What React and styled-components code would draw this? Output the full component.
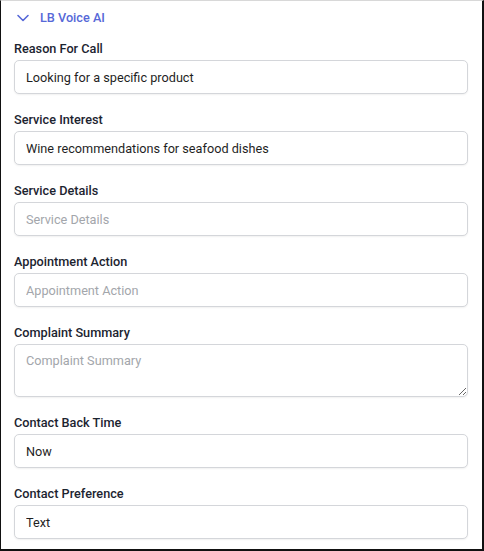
import React from 'react';
import styled, { createGlobalStyle } from 'styled-components';

const GlobalStyle = createGlobalStyle`
  html, body {
    margin: 0;
    padding: 0;
    background: #fff;
  }
  body {
    font-family: Roboto, "Noto Sans", Inter, sans-serif;
  }
`;

const Frame = styled.div`
  box-sizing: border-box;
  width: 484px;
  height: 551px;
  border-left: 1px solid #111;
  border-top: 1px solid #d8d8d8;
  border-right: 2px solid #111;
  border-bottom: 2px solid #111;
  overflow: hidden;
  background: #fff;
`;

const Header = styled.div`
  display: flex;
  align-items: center;
  gap: 10px;
  height: 33px;
  padding: 0 0 0 15px;
  color: #5668d8;
  font-size: 12.7px;
  font-weight: 500;
`;

const Form = styled.div`
  display: flex;
  flex-direction: column;
  gap: 17px;
  padding: 6px 14px 0 13px;
`;

const Field = styled.div`
  display: flex;
  flex-direction: column;
  gap: 3px;
`;

const Label = styled.label`
  font-size: 12.7px;
  font-weight: 500;
  line-height: 17px;
  color: #1c2430;
`;

const Input = styled.input`
  box-sizing: border-box;
  height: 34px;
  width: 100%;
  padding: 0 11px;
  border: 1px solid #d4d6da;
  border-radius: 5px;
  box-shadow: 0 1px 2px rgba(0, 0, 0, 0.06);
  font-family: inherit;
  font-size: 12.7px;
  color: #1f1f1f;
  background: #fff;
  outline: none;
  &::placeholder {
    color: #a3a6ab;
  }
`;

const TextArea = styled.textarea`
  box-sizing: border-box;
  height: 53px;
  width: 100%;
  padding: 8px 11px;
  border: 1px solid #d4d6da;
  border-radius: 5px;
  box-shadow: 0 1px 2px rgba(0, 0, 0, 0.06);
  font-family: inherit;
  font-size: 12.7px;
  color: #1f1f1f;
  resize: vertical;
  outline: none;
  display: block;
  &::placeholder {
    color: #a3a6ab;
  }
`;

const fields = [
  { label: 'Reason For Call', value: 'Looking for a specific product' },
  { label: 'Service Interest', value: 'Wine recommendations for seafood dishes' },
  { label: 'Service Details', placeholder: 'Service Details' },
  { label: 'Appointment Action', placeholder: 'Appointment Action' },
  { label: 'Complaint Summary', placeholder: 'Complaint Summary', multiline: true },
  { label: 'Contact Back Time', value: 'Now' },
  { label: 'Contact Preference', value: 'Text' },
];

export default function App() {
  return (
    <>
      <GlobalStyle />
      <Frame>
        <Header>
          <svg width="14" height="14" viewBox="0 0 14 14" fill="none">
            <path d="M2 4.5 L7 9.5 L12 4.5" stroke="#5668d8" strokeWidth="1.6" strokeLinecap="round" strokeLinejoin="round" />
          </svg>
          LB Voice AI
        </Header>
        <Form>
          {fields.map((f, i) => (
            <Field key={i}>
              <Label>{f.label}</Label>
              {f.multiline ? (
                <TextArea placeholder={f.placeholder} defaultValue={f.value} />
              ) : (
                <Input placeholder={f.placeholder} defaultValue={f.value} />
              )}
            </Field>
          ))}
        </Form>
      </Frame>
    </>
  );
}
